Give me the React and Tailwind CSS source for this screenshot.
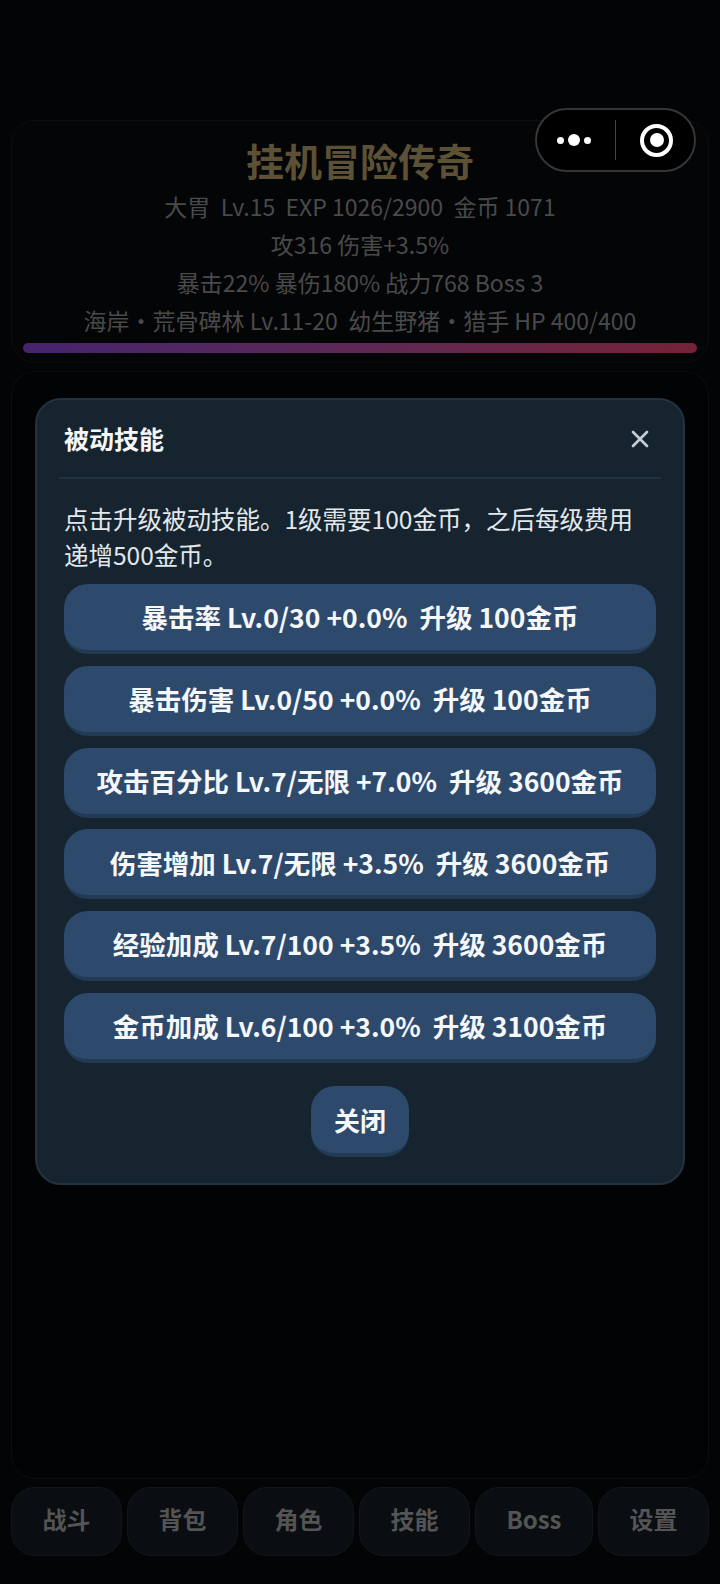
import { X } from 'lucide-react';

const cjk = { fontFamily: '"Noto Sans CJK SC", sans-serif' };

const skills = [
  '暴击率 Lv.0/30 +0.0%  升级 100金币',
  '暴击伤害 Lv.0/50 +0.0%  升级 100金币',
  '攻击百分比 Lv.7/无限 +7.0%  升级 3600金币',
  '伤害增加 Lv.7/无限 +3.5%  升级 3600金币',
  '经验加成 Lv.7/100 +3.5%  升级 3600金币',
  '金币加成 Lv.6/100 +3.0%  升级 3100金币',
];

const tabs = ['战斗', '背包', '角色', '技能', 'Boss', '设置'];

export default function App() {
  return (
    <div style={cjk} className="relative flex h-[1584px] w-[720px] flex-col overflow-hidden bg-[#030405] px-[11px] pt-[120px] pb-[28px]">
      {/* Header stats, dimmed behind the dialog */}
      <div className="flex h-[243px] shrink-0 flex-col items-center rounded-[24px] border border-[#0b0e11] bg-[#040507] px-[11px] pt-[13px] text-[23px] leading-[38px] text-[#4a4a4a]">
        <h1 className="text-[38px] leading-[52px] font-bold text-[#5c5135]">挂机冒险传奇</h1>
        <p className="mt-[1px] whitespace-pre">大胃  Lv.15  EXP 1026/2900  金币 1071</p>
        <p className="whitespace-pre">攻316 伤害+3.5%</p>
        <p className="whitespace-pre">暴击22% 暴伤180% 战力768 Boss 3</p>
        <p className="whitespace-pre">海岸・荒骨碑林 Lv.11-20  幼生野猪・猎手 HP 400/400</p>
        <div className="mt-[4px] h-[10px] w-full shrink-0 rounded-full bg-gradient-to-r from-[#45246e] to-[#752236]" />
      </div>

      {/* Main panel */}
      <div className="mt-[8px] flex-1 rounded-[24px] border border-[#0b0e11] bg-[#020304]" />

      {/* Bottom tabs */}
      <div className="mt-[8px] flex h-[69px] shrink-0 gap-[5px]">
        {tabs.map((t) => (
          <div key={t} className={`flex items-center justify-center rounded-[24px] border border-[#12161b] bg-[#0a0d12] pb-[6px] text-[24px] font-bold text-[#545454] ${t === 'Boss' ? 'w-[118px]' : 'w-[111px]'}`}>
            {t}
          </div>
        ))}
      </div>

      {/* WeChat capsule */}
      <div className="absolute top-[108px] left-[535px] flex h-[64px] w-[161px] items-center rounded-full border-2 border-[#363636] bg-black">
        <div className="flex w-[78px] items-center justify-center gap-[4px] pr-[4px]">
          <span className="h-[7px] w-[7px] rounded-full bg-white" />
          <span className="h-[12px] w-[12px] rounded-full bg-white" />
          <span className="h-[7px] w-[7px] rounded-full bg-white" />
        </div>
        <div className="h-[40px] w-[1px] bg-[#444444]" />
        <div className="flex flex-1 items-center justify-center pl-[3px]">
          <div className="flex h-[33px] w-[33px] items-center justify-center rounded-full border-[4px] border-white">
            <span className="h-[14px] w-[14px] rounded-full bg-white" />
          </div>
        </div>
      </div>

      {/* Passive skills dialog */}
      <div className="absolute top-[398px] left-[35px] flex h-[787px] w-[650px] flex-col rounded-[26px] border-2 border-[#22323f] bg-[#162430] px-[27px]">
        <div className="mx-[-5px] flex h-[79px] shrink-0 items-center justify-between border-b-2 border-[#22313e] pr-[7px] pl-[5px]">
          <h2 className="text-[25px] font-bold text-[#f4f6f8]">被动技能</h2>
          <X size={28} strokeWidth={2.3} className="text-[#c5ccd3]" />
        </div>
        <p className="mt-[22px] text-[24.5px] leading-[36px] text-[#e3e8ec]">点击升级被动技能。1级需要100金币，之后每级费用递增500金币。</p>
        <div className="mt-[11px] flex flex-col gap-[11.8px]">
          {skills.map((s) => (
            <button key={s} className="h-[70px] whitespace-pre rounded-[24px] border-b-4 border-[#233a54] bg-[#2d4a6d] text-[26.5px] font-bold text-[#f5f7f9]">
              {s}
            </button>
          ))}
        </div>
        <button className="mx-auto mt-[23px] h-[71px] w-[98px] rounded-[24px] border-b-4 border-[#233a54] bg-[#2d4a6d] text-[26px] font-bold text-[#f5f7f9]">
          关闭
        </button>
      </div>
    </div>
  );
}
